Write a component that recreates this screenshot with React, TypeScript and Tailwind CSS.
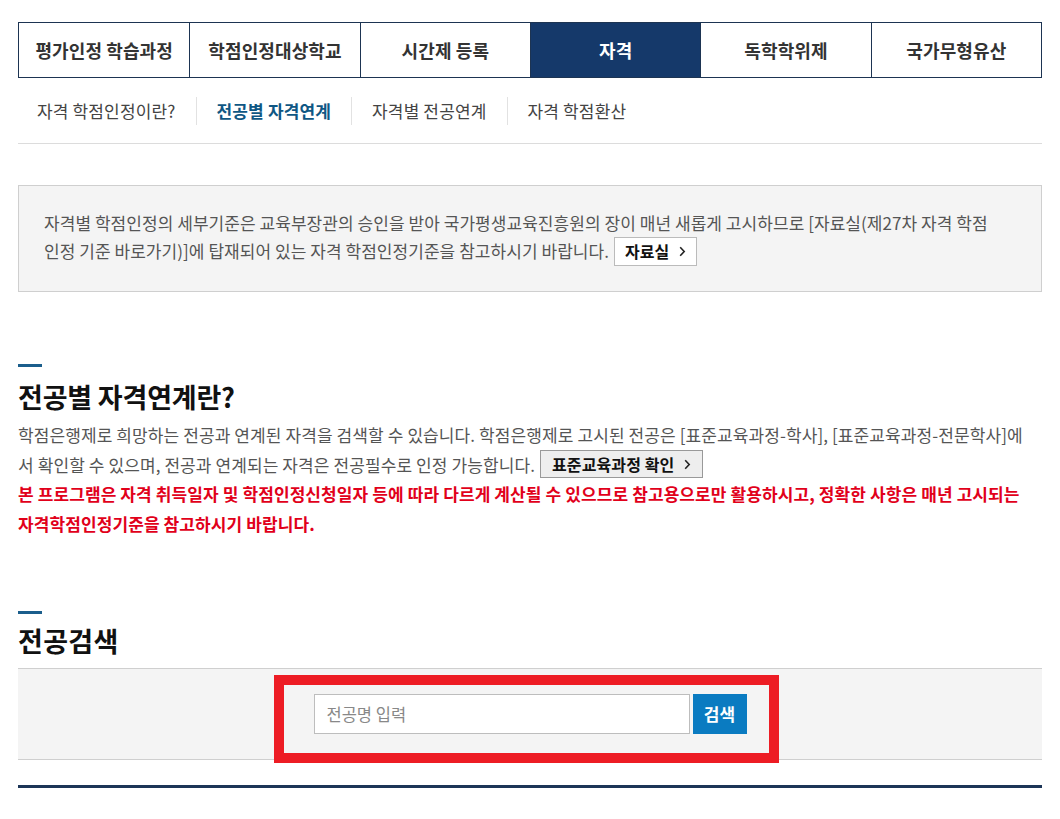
import React from "react";

const Chevron = () => (
  <svg width="7" height="11" viewBox="0 0 7 11" className="ml-[10px] inline-block" fill="none">
    <path d="M1.2 1.2 L5.2 5.5 L1.2 9.8" stroke="#222" strokeWidth="1.6" />
  </svg>
);

const tabs = ["평가인정 학습과정", "학점인정대상학교", "시간제 등록", "자격", "독학학위제", "국가무형유산"];
const subs = ["자격 학점인정이란?", "전공별 자격연계", "자격별 전공연계", "자격 학점환산"];

export default function App() {
  return (
    <div className="min-h-[819px] bg-white font-['Noto_Sans_CJK_KR','Malgun_Gothic',sans-serif]">
      <div className="mx-auto w-[1024px] pt-[22px]">
        {/* top tabs */}
        <div className="grid grid-cols-6 border border-[#1d3452]">
          {tabs.map((t, i) => (
            <div
              key={t}
              className={
                "flex h-[54px] items-center justify-center text-[18px] font-bold tracking-[0.1px] " +
                (i > 0 ? "border-l border-[#1d3452] " : "") +
                (i === 3 ? "bg-[#15396a] text-white" : "bg-white text-[#333]")
              }
            >
              {t}
            </div>
          ))}
        </div>

        {/* sub nav */}
        <div className="flex items-center border-b border-[#dcdcdc] pb-[18px] pl-[19px] pt-[19px]">
          {subs.map((s, i) => (
            <React.Fragment key={s}>
              {i > 0 && <div className="mx-[20px] h-[28px] w-px bg-[#e2e2e2]" />}
              <div
                className={
                  "flex h-[28px] items-center text-[17px] tracking-[0.15px] " +
                  (i === 1 ? "font-bold text-[#0f5784]" : "text-[#444]")
                }
              >
                {s}
              </div>
            </React.Fragment>
          ))}
        </div>

        {/* info box */}
        <div className="mt-[41px] border border-[#cfcfcf] bg-[#f4f4f4] pb-[26px] pl-[25px] pr-[10px] pt-[23px] text-[17px] leading-[28px] tracking-[0.05px] text-[#555]">
          <div className="whitespace-nowrap">
            자격별 학점인정의 세부기준은 교육부장관의 승인을 받아 국가평생교육진흥원의 장이 매년 새롭게 고시하므로 [자료실(제27차 자격 학점
          </div>
          <div className="flex h-[28px] items-center whitespace-nowrap">
            인정 기준 바로가기)]에 탑재되어 있는 자격 학점인정기준을 참고하시기 바랍니다.
            <span className="ml-[5px] inline-flex h-[29px] items-center border border-[#bbb] bg-white px-[10px] text-[16px] font-bold text-[#111]">
              자료실
              <Chevron />
            </span>
          </div>
        </div>

        {/* section 1 */}
        <div className="mt-[72px] h-[3px] w-[24px] bg-[#1b5e8c]" />
        <h2 className="mt-[11px] text-[27px] font-bold leading-[38px] tracking-[-0.2px] text-[#111]">
          전공별 자격연계란?
        </h2>
        <div className="mt-[4px] text-[17px] leading-[29.5px] tracking-[0.1px] text-[#555]">
          <div className="whitespace-nowrap">
            학점은행제로 희망하는 전공과 연계된 자격을 검색할 수 있습니다. 학점은행제로 고시된 전공은 [표준교육과정-학사], [표준교육과정-전문학사]에
          </div>
          <div className="flex h-[29.5px] items-center whitespace-nowrap">
            서 확인할 수 있으며, 전공과 연계되는 자격은 전공필수로 인정 가능합니다.
            <span className="ml-[5px] inline-flex h-[28px] items-center border border-[#999] bg-[#eeeeee] px-[11px] text-[16px] font-bold text-[#111]">
              표준교육과정 확인
              <Chevron />
            </span>
          </div>
          <div className="whitespace-nowrap font-bold text-[#e1001a]">
            본 프로그램은 자격 취득일자 및 학점인정신청일자 등에 따라 다르게 계산될 수 있으므로 참고용으로만 활용하시고, 정확한 사항은 매년 고시되는
          </div>
          <div className="whitespace-nowrap font-bold text-[#e1001a]">자격학점인정기준을 참고하시기 바랍니다.</div>
        </div>

        {/* section 2 */}
        <div className="mt-[73px] h-[3px] w-[24px] bg-[#1b5e8c]" />
        <h2 className="mt-[8px] text-[27px] font-bold leading-[38px] tracking-[0.3px] text-[#111]">전공검색</h2>
        <div className="relative mt-[8px] flex justify-center border-y border-[#cfcfcf] bg-[#f4f4f4] py-[25px]">
          <div className="flex h-[40px] w-[376px] items-center border border-[#bdbdbd] bg-white pl-[12px] text-[16.5px] text-[#888]">
            전공명 입력
          </div>
          <div className="ml-[3px] flex h-[40px] w-[54px] items-center justify-center bg-[#0a7bc1] text-[17px] font-bold text-white">
            검색
          </div>
          <div className="pointer-events-none absolute left-[256px] top-[6px] h-[88px] w-[505px] border-[10px] border-[#ed1c24]" />
        </div>

        <div className="mt-[25px] h-[3px] bg-[#1c3557]" />
      </div>
    </div>
  );
}
